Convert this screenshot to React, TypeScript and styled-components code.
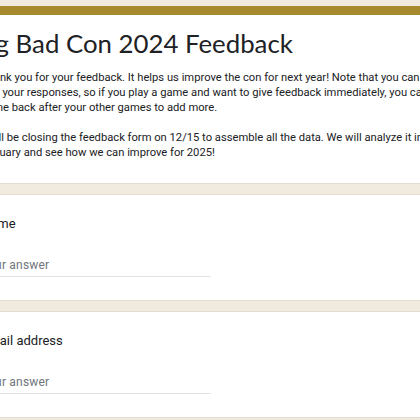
import styled, { createGlobalStyle } from "styled-components";

const GlobalStyle = createGlobalStyle`
  html, body {
    margin: 0;
    padding: 0;
    background: #f0ebde;
  }
  body {
    font-family: Roboto, "Liberation Sans", sans-serif;
    color: #202124;
  }
`;

const Page = styled.div`
  width: 420px;
  height: 420px;
  overflow: hidden;
  background: #f0ebde;
`;

const Column = styled.div`
  display: flex;
  flex-direction: column;
  gap: 10px;
  width: 640px;
  margin-left: -40px;
  padding-top: 6px;
`;

const Card = styled.section<{ accent?: boolean }>`
  background: #fff;
  border: 1px solid #e2ddd0;
  border-top: ${({ accent }) => (accent ? "9px solid #a68a2d" : "1px solid #e2ddd0")};
  border-radius: 7px;
  padding: ${({ accent }) => (accent ? "11px 20px 20px" : "19px 20px 0")};
  box-sizing: border-box;
  height: ${({ accent }) => (accent ? "178px" : "107px")};
`;

const Title = styled.h1`
  margin: 0 0 0 -8px;
  font-family: Lato, "Open Sans", sans-serif;
  font-weight: 400;
  font-size: 25.8px;
  line-height: 34px;
  color: #202124;
`;

const Description = styled.p`
  margin: 10px 0 0;
  font-size: 11.2px;
  line-height: 15px;
  white-space: nowrap;
  color: #202124;
`;

const Label = styled.div`
  font-size: 13px;
  line-height: 20px;
  color: #202124;
`;

const AnswerField = styled.div`
  width: 230px;
  margin-top: 23px;
  padding-bottom: 3px;
  border-bottom: 1px solid #e3e3e3;
  font-size: 12px;
  line-height: 16px;
  color: #70757a;
  letter-spacing: 0.2px;
`;

const description = [
  "Thank you for your feedback. It helps us improve the con for next year! Note that you can",
  "edit your responses, so if you play a game and want to give feedback immediately, you can",
  "come back after your other games to add more.",
  "",
  "We'll be closing the feedback form on 12/15 to assemble all the data. We will analyze it in",
  "January and see how we can improve for 2025!",
];

const questions = ["Name", "Email address"];

export default function App() {
  return (
    <Page>
      <GlobalStyle />
      <Column>
        <Card accent>
          <Title>Big Bad Con 2024 Feedback</Title>
          <Description>
            {description.map((line, i) => (
              <span key={i}>
                {line}
                <br />
              </span>
            ))}
          </Description>
        </Card>
        {questions.map((q) => (
          <Card key={q}>
            <Label>{q}</Label>
            <AnswerField>Your answer</AnswerField>
          </Card>
        ))}
      </Column>
    </Page>
  );
}
